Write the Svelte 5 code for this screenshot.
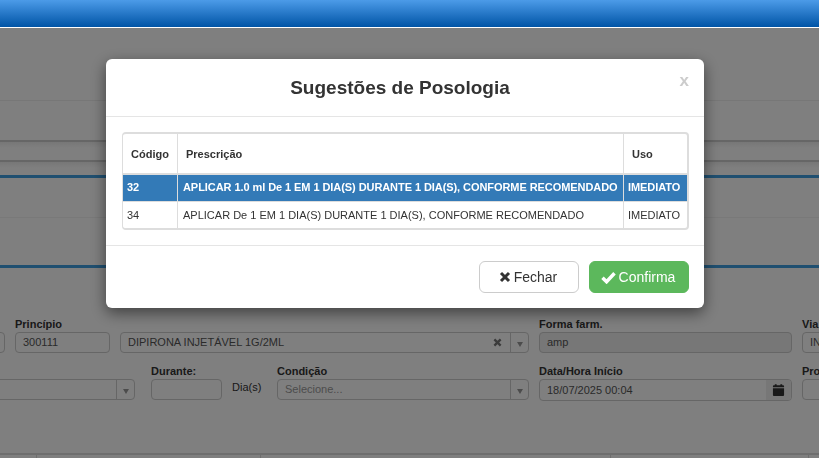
<script>
	const sugestoes = [
		{ codigo: "32", texto: "APLICAR 1.0 ml De 1 EM 1 DIA(S) DURANTE 1 DIA(S), CONFORME RECOMENDADO", uso: "IMEDIATO", ativo: true },
		{ codigo: "34", texto: "APLICAR De 1 EM 1 DIA(S) DURANTE 1 DIA(S), CONFORME RECOMENDADO", uso: "IMEDIATO", ativo: false }
	];
</script>

<header class="topo"></header>

<main class="pagina">
	<div class="faixa f1"></div>
	<div class="faixa f2"></div>
	<div class="faixa f3"></div>
	<div class="faixa f4"></div>
	<div class="faixa f5"></div>
	<div class="faixa f6"></div>

	<div class="linha l1">
		<div class="campo c-ant"><span class="rot">&nbsp;</span><div class="inp"></div></div>
		<div class="campo c-princ"><span class="rot">Princípio</span><div class="inp">300111</div></div>
		<div class="campo c-nome">
			<span class="rot">&nbsp;</span>
			<div class="inp sel">
				<span class="valor">DIPIRONA INJETÁVEL 1G/2ML</span>
				<svg class="limpa" viewBox="0 0 10 10"><path d="M1.5 1.5l7 7M8.5 1.5l-7 7" /></svg>
				<span class="seta"><i></i></span>
			</div>
		</div>
		<div class="campo c-forma"><span class="rot">Forma farm.</span><div class="inp off">amp</div></div>
		<div class="campo c-via"><span class="rot">Via</span><div class="inp">IN</div></div>
	</div>

	<div class="linha l2">
		<div class="campo c-freq">
			<span class="rot">&nbsp;</span>
			<div class="inp sel"><span class="valor"></span><span class="seta"><i></i></span></div>
		</div>
		<div class="campo c-dur"><span class="rot">Durante:</span><div class="inp"></div></div>
		<span class="dias">Dia(s)</span>
		<div class="campo c-cond">
			<span class="rot">Condição</span>
			<div class="inp sel"><span class="valor claro">Selecione...</span><span class="seta"><i></i></span></div>
		</div>
		<div class="campo c-forma">
			<span class="rot">Data/Hora Início</span>
			<div class="inp data">
				<span class="valor">18/07/2025 00:04</span>
				<span class="cal">
					<svg viewBox="0 0 14 14"><path d="M1 5h12v7.5a1 1 0 0 1-1 1H2a1 1 0 0 1-1-1zM1 4V3a1 1 0 0 1 1-1h1V.8h2V2h4V.8h2V2h1a1 1 0 0 1 1 1v1z" /></svg>
				</span>
			</div>
		</div>
		<div class="campo c-via"><span class="rot">Pro</span><div class="inp"></div></div>
	</div>

	<div class="rodape">
		<span class="s1"></span><span class="s2"></span><span class="s3"></span><span class="s4"></span>
	</div>
</main>

<div class="fundo">
	<section class="modal">
		<div class="m-topo">
			<h4>Sugestões de Posologia</h4>
			<span class="fechar">x</span>
		</div>
		<div class="m-corpo">
			<table>
				<thead>
					<tr><th class="t-cod">Código</th><th class="t-pre">Prescrição</th><th class="t-uso">Uso</th></tr>
				</thead>
				<tbody>
					{#each sugestoes as s}
						<tr class:ativo={s.ativo}>
							<td>{s.codigo}</td>
							<td class="d-texto">{s.texto}</td>
							<td>{s.uso}</td>
						</tr>
					{/each}
				</tbody>
			</table>
		</div>
		<div class="m-pe">
			<button class="btn branco">
				<svg viewBox="0 0 12 12"><path d="M2 2l8 8M10 2l-8 8" /></svg>
				Fechar
			</button>
			<button class="btn verde">
				<svg viewBox="0 0 14 12"><path d="M1.4 6.2l3.8 3.8 7.4-8" /></svg>
				Confirma
			</button>
		</div>
	</section>
</div>

<style>
	:global(body) {
		margin: 0;
		background: #fff;
		overflow: hidden;
		font-family: "Liberation Sans", Arial, sans-serif;
		color: #333;
	}

	.topo {
		position: relative;
		z-index: 20;
		height: 27px;
		border-bottom: 1px solid #fff;
		background: linear-gradient(to bottom, #4c9be8, #0054a6);
	}

	.pagina {
		height: 430px;
		display: flex;
		flex-direction: column;
		overflow: hidden;
	}

	.faixa {
		flex: none;
	}
	.f1 {
		margin-top: 72px;
		border-top: 1px solid #eee;
	}
	.f2 {
		margin-top: 39px;
		height: 6px;
		border-top: 2px solid #ccc;
		background: linear-gradient(to bottom, #eee, #fff);
	}
	.f3 {
		margin-top: 12px;
		height: 6px;
		border-top: 2px solid #ccc;
		background: linear-gradient(to bottom, #eee, #fff);
	}
	.f4 {
		margin-top: 7px;
		border-top: 3px solid #3f9fe0;
	}
	.f5 {
		margin-top: 39px;
		border-top: 1px solid #f2f2f2;
	}
	.f6 {
		margin-top: 47px;
		border-top: 3px solid #3f9fe0;
	}

	.linha {
		flex: none;
		display: flex;
		gap: 10px;
		font-size: 11px;
	}
	.l1 {
		margin-top: 49px;
		margin-left: -50px;
	}
	.l2 {
		margin-top: 11px;
		margin-left: -100px;
	}

	.campo {
		flex: none;
		display: flex;
		flex-direction: column;
		gap: 1px;
	}
	.rot {
		font-size: 11px;
		line-height: 14px;
		font-weight: bold;
		color: #333;
		white-space: nowrap;
	}
	.inp {
		box-sizing: border-box;
		height: 21px;
		border: 1px solid #ccc;
		border-radius: 4px;
		background: #fff;
		padding: 0 7px;
		line-height: 21px;
		color: #555;
		display: flex;
		align-items: center;
		white-space: nowrap;
		overflow: hidden;
	}
	.off {
		background: #eee;
	}

	.c-ant { width: 55px; }
	.c-princ { width: 95px; }
	.c-nome { width: 409px; }
	.c-forma { width: 253px; }
	.c-via { width: 80px; }
	.c-freq { width: 235px; }
	.c-dur { width: 71px; margin-left: 6px; }
	.c-cond { width: 252px; }

	.dias {
		flex: none;
		align-self: flex-end;
		margin-bottom: 7px;
		font-size: 11px;
		line-height: 14px;
		width: 35px;
	}

	.sel {
		padding-right: 0;
	}
	.valor {
		flex: 1;
	}
	.claro {
		color: #999;
	}
	.limpa {
		width: 9px;
		height: 9px;
		margin-right: 8px;
		fill: none;
		stroke: #777;
		stroke-width: 2.6;
	}
	.seta {
		flex: none;
		width: 17px;
		height: 100%;
		border-left: 1px solid #ccc;
		display: flex;
		align-items: center;
		justify-content: center;
	}
	.seta i {
		margin-top: 3px;
		border-style: solid;
		border-width: 5px 3.5px 0;
		border-color: #999 transparent transparent;
	}

	.data {
		padding-right: 0;
		height: 22px;
	}
	.cal {
		flex: none;
		width: 25px;
		height: 100%;
		background: #eee;
		display: flex;
		align-items: center;
		justify-content: center;
	}
	.cal svg {
		width: 13px;
		height: 14px;
		fill: #333;
	}

	.rodape {
		margin-top: auto;
		height: 3px;
		border-top: 2px solid #ddd;
		display: flex;
		flex: none;
	}
	.rodape span {
		flex: none;
		border-left: 1px solid #ddd;
	}
	.s1 { margin-left: 36px; width: 223px; }
	.s2 { width: 349px; }
	.s3 { width: 197px; }

	.fundo {
		position: fixed;
		inset: 0;
		z-index: 10;
		background: rgba(0, 0, 0, 0.5);
	}

	.modal {
		box-sizing: border-box;
		width: 598px;
		height: 249px;
		margin: 59px 0 0 106px;
		background: #fff;
		border-radius: 6px;
		box-shadow: 0 5px 15px rgba(0, 0, 0, 0.5);
	}

	.m-topo {
		position: relative;
		box-sizing: border-box;
		height: 58px;
		padding-right: 10px;
		border-bottom: 1px solid #e5e5e5;
		display: flex;
		align-items: center;
		justify-content: center;
	}
	h4 {
		margin: 0;
		font-size: 19px;
		font-weight: bold;
		color: #333;
		line-height: 56px;
	}
	.fechar {
		position: absolute;
		top: 12px;
		right: 15px;
		font-size: 17px;
		line-height: 20px;
		font-weight: bold;
		color: #ccc;
	}

	.m-corpo {
		padding: 15px 15px 0 16px;
		height: 129px;
		box-sizing: border-box;
		border-bottom: 1px solid #e5e5e5;
	}

	table {
		box-sizing: border-box;
		width: 567px;
		height: 98px;
		border-collapse: separate;
		border-spacing: 0;
		border-style: solid;
		border-color: #ddd;
		border-width: 2px 2px 2px 1px;
		border-radius: 4px;
		font-size: 11px;
		table-layout: fixed;
	}
	th {
		box-sizing: border-box;
		height: 41px;
		padding: 0 8px;
		text-align: left;
		font-weight: bold;
		border-bottom: 2px solid #ddd;
		color: #333;
	}
	td {
		box-sizing: border-box;
		height: 26px;
		padding: 0 4px;
		white-space: nowrap;
		color: #333;
	}
	tbody tr:first-child td {
		height: 27px;
		padding-bottom: 2px;
		border-bottom: 1px solid #ddd;
	}
	td.d-texto {
		padding-left: 5px;
	}
	th + th,
	td + td {
		border-left: 1px solid #ddd;
	}
	.t-cod { width: 54px; }
	.t-uso { width: 64px; }

	tr.ativo td {
		background: #337ab7;
		color: #fff;
		font-weight: bold;
		letter-spacing: -0.07px;
	}

	.m-pe {
		display: flex;
		justify-content: flex-end;
		gap: 10px;
		padding: 15px 15px 0 0;
	}
	.btn {
		box-sizing: border-box;
		width: 100px;
		height: 32px;
		border: 1px solid #ccc;
		border-radius: 6px;
		font-family: inherit;
		font-size: 14px;
		display: flex;
		align-items: center;
		justify-content: center;
		gap: 3px;
		padding: 0 2px 0 0;
	}
	.btn svg {
		width: 12px;
		height: 12px;
		fill: none;
		stroke: currentColor;
		stroke-width: 3;
	}
	.branco {
		background: #fff;
		color: #333;
	}
	.verde {
		background: #5cb85c;
		border-color: #5cb85c;
		color: #fff;
	}
	.verde svg {
		width: 15px;
		height: 13px;
		stroke-width: 3.2;
	}
</style>
